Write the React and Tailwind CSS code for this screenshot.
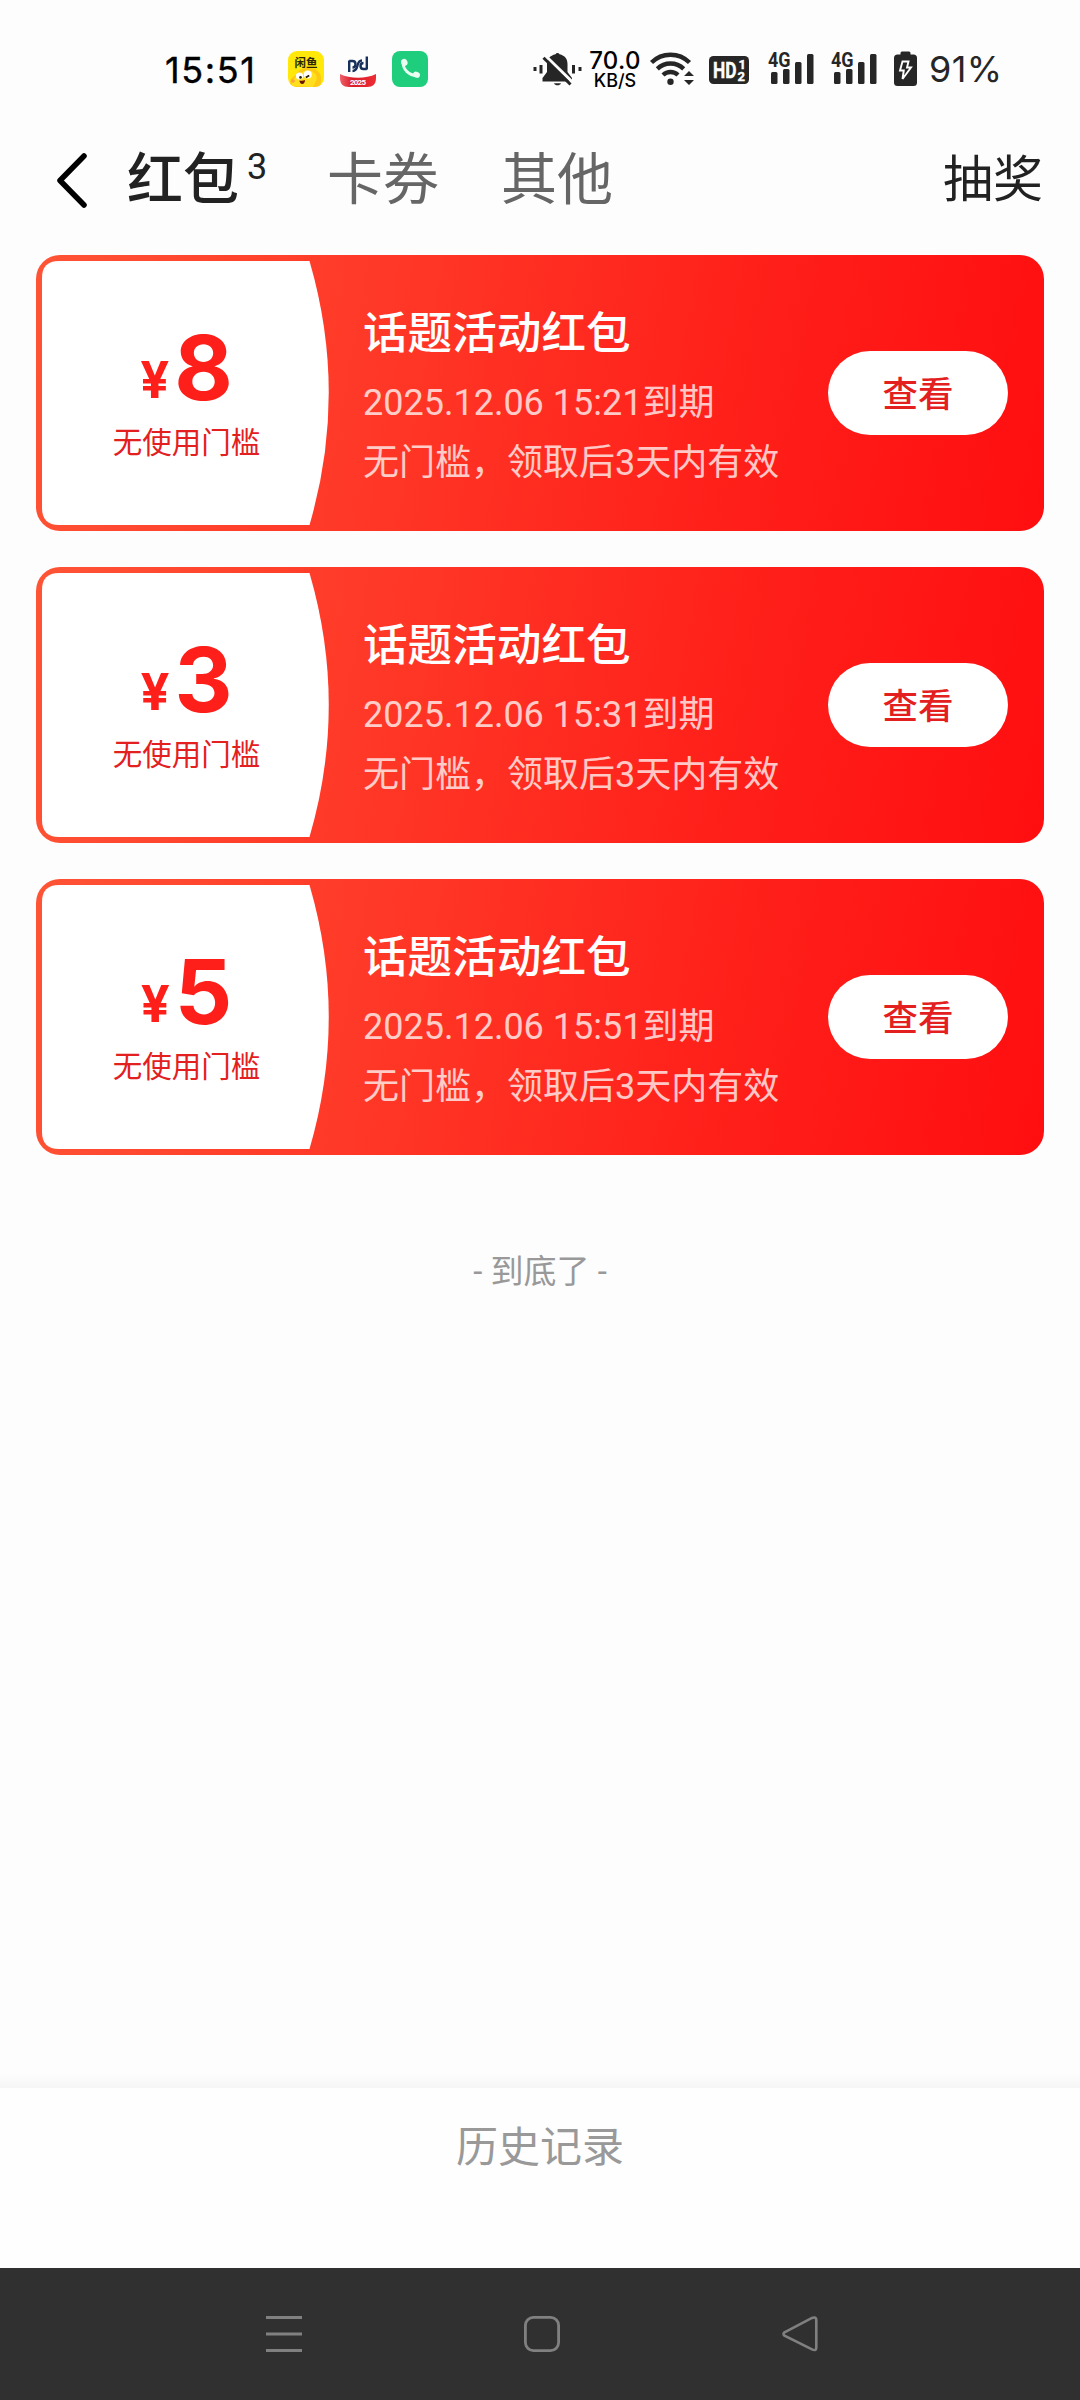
import React from "react";

const COUPONS = [
  { id: 1, amount: "8", expires: "2025.12.06 15:21到期" },
  { id: 2, amount: "3", expires: "2025.12.06 15:31到期" },
  { id: 3, amount: "5", expires: "2025.12.06 15:51到期" },
];

function XianyuIcon() {
  return (
    <svg width="36" height="36" viewBox="0 0 36 36">
      <defs>
        <clipPath id="xy">
          <rect width="36" height="36" rx="9" />
        </clipPath>
      </defs>
      <g clipPath="url(#xy)">
        <rect width="36" height="36" fill="#ffe80a" />
        <path d="M3 36C1 31 2 27 8 24c2-5 7-7 12-7 9 0 14 5 13 13l-1 6z" fill="#ffc814" />
        <path d="M4 35c-1-4 1-8 6-10 3-5 8-6 12-5 6 1 8 6 6 10l-3 6z" fill="#ffdf1e" />
        <text x="6.500" y="15.500" fill="#2b2600" fontSize="11.500" fontWeight="700" fontFamily="'Noto Sans CJK SC', sans-serif">
          闲鱼
        </text>
        <circle cx="11.500" cy="25" r="3.600" fill="#fff" />
        <circle cx="19.800" cy="23.600" r="4" fill="#fff" />
        <circle cx="12.500" cy="26.400" r="1.300" fill="#2a1a00" />
        <path d="M17.800 26.500l3.400-2" stroke="#2a1a00" strokeWidth="1.800" />
        <path d="M11.500 29.500c2 .6 4 .4 5.500-.4 0 2.400-1 3.900-2.800 3.900-1.700 0-2.600-1.500-2.700-3.500z" fill="#6b1400" />
        <circle cx="5" cy="30" r="1.800" fill="#ffa03c" />
      </g>
    </svg>
  );
}

function BankIcon() {
  return (
    <svg width="36" height="36" viewBox="0 0 36 36">
      <defs>
        <linearGradient id="bank" x1="0" y1="0" x2="1" y2="0">
          <stop offset="0" stopColor="#f0606a" />
          <stop offset=".35" stopColor="#d81e2a" />
          <stop offset="1" stopColor="#ee2c34" />
        </linearGradient>
      </defs>
      <g fill="none" stroke="#16305c" strokeWidth="2.400">
        <path d="M9.200 21V9.500M9.200 10H12.500C16.500 10 16.500 16.500 12.500 16.500" />
        <path d="M26.800 5.500V18.500M26.800 18H23.500C19.500 18 19.500 12 23.500 12" />
        <path d="M12.500 20C20 20 15 9.500 22 9.500" />
      </g>
      <path d="M0 23c10 5 26 5 36 0v4c0 6-3 9-9 9H9c-6 0-9-3-9-9z" fill="url(#bank)" />
      <text x="18" y="34" textAnchor="middle" fill="#fff" fontSize="8" fontWeight="700" fontFamily="Roboto, sans-serif" textLength="16">
        2025
      </text>
    </svg>
  );
}

function PhoneIcon() {
  return (
    <svg width="36" height="36" viewBox="0 0 36 36">
      <rect width="36" height="36" rx="8" fill="#1fce7c" />
      <path d="M11 11.500c0 7 6 13 13.500 13" fill="none" stroke="#e8fff2" strokeWidth="2.800" />
      <ellipse cx="12.300" cy="11.300" rx="3.200" ry="3.600" fill="#e8fff2" transform="rotate(-20 12.300 11.300)" />
      <ellipse cx="24.500" cy="23.800" rx="3.600" ry="3" fill="#e8fff2" transform="rotate(20 24.500 23.800)" />
    </svg>
  );
}

function MuteIcon() {
  return (
    <svg width="50" height="36" viewBox="0 0 50 36" fill="#262626">
      <rect x="1.500" y="16" width="3" height="4" />
      <rect x="7.500" y="14" width="3" height="8.500" />
      <rect x="40" y="14" width="3" height="8.500" />
      <rect x="46.500" y="16" width="3" height="4" />
      <path d="M23.500 3.200a2.200 2.200 0 0 1 4 0C33 4.500 35.500 8 35.500 13v8l4.500 6v3.500H10.500V27l4.500-6v-8c0-5 3-8.500 8.500-9.800z" />
      <path d="M22 32.200h7c-1 2.800-6 2.800-7 0z" />
      <path d="M13.500 4.800L41 31.600" stroke="#fdfdfd" strokeWidth="3" />
      <path d="M11.500 6.800L38.500 33.500" stroke="#262626" strokeWidth="3" />
    </svg>
  );
}

function WifiIcon() {
  return (
    <svg width="45" height="36" viewBox="0 0 45 36" fill="none" stroke="#262626">
      <path d="M1.500 11.500a27 27 0 0 1 38 0" strokeWidth="4.400" />
      <path d="M7.300 17.800a19 19 0 0 1 26.400 0" strokeWidth="4.400" />
      <path d="M13 24a11 11 0 0 1 15 0" strokeWidth="4.400" />
      <circle cx="20.500" cy="30.800" r="3.200" fill="#262626" stroke="none" />
      <path d="M34 25l5-5 5 5zM34 29l5 5 5-5z" fill="#262626" stroke="none" />
    </svg>
  );
}

function HdIcon() {
  return (
    <svg width="40" height="28" viewBox="0 0 40 28" fill="#fff" stroke="#fff" strokeWidth="0.400" fontFamily="Roboto, sans-serif" fontWeight="700">
      <rect width="40" height="28" rx="4.500" fill="#262626" stroke="none" />
      <text x="4" y="21.500" fontSize="21.500" textLength="23.500" lengthAdjust="spacingAndGlyphs">HD</text>
      <text x="29.500" y="13" fontSize="13">1</text>
      <text x="28.500" y="25" fontSize="13">2</text>
    </svg>
  );
}

function SignalIcon() {
  return (
    <svg className="overflow-visible" width="47" height="36" viewBox="0 0 47 36" fill="#262626">
      <text x="0" y="15.500" fontSize="20" fontWeight="700" fontFamily="Roboto, sans-serif" textLength="22.500" lengthAdjust="spacingAndGlyphs">
        4G
      </text>
      <rect x="3" y="21" width="6.500" height="12" rx="1.500" />
      <rect x="15" y="18" width="6.500" height="15" rx="1.500" />
      <rect x="27" y="11" width="6.500" height="22" rx="1.500" />
      <rect x="39" y="3" width="6.500" height="30" rx="1.500" />
    </svg>
  );
}

function BatteryIcon() {
  return (
    <svg width="23" height="36" viewBox="0 0 23 36">
      <rect x="6.500" y="0.500" width="10" height="5" rx="1.500" fill="#262626" />
      <rect x="0" y="3.500" width="23" height="31.500" rx="3.500" fill="#262626" />
      <path d="M8.500 10.500h6l-1.500 6h4L8.500 28l1.300-8.500H6z" fill="none" stroke="#fff" strokeWidth="1.900" />
    </svg>
  );
}

function StatusBar() {
  return (
    <div className="flex h-[138px] items-start pl-[165px] pt-[51px] font-['Inter',sans-serif] text-[#262626]">
      <div className="flex h-[38px] w-[123px] items-center text-[36px] leading-none tracking-[1.6px] text-black">
        <span className="[-webkit-text-stroke:0.4px_#000]">15:51</span>
      </div>
      <div className="flex w-[244px] gap-4">
        <XianyuIcon />
        <BankIcon />
        <PhoneIcon />
      </div>
      <MuteIcon />
      <div className="ml-[5px] flex w-[56px] flex-col items-center font-medium text-black">
        <span className="text-[24px] leading-[19px] tracking-[0.3px]">70.0</span>
        <span className="pt-[2px] text-[18px] leading-[18px]">KB/S</span>
      </div>
      <div className="ml-[7px]">
        <WifiIcon />
      </div>
      <div className="ml-3.5 pt-[5px]">
        <HdIcon />
      </div>
      <div className="ml-[19px] flex gap-4">
        <SignalIcon />
        <SignalIcon />
      </div>
      <div className="ml-4">
        <BatteryIcon />
      </div>
      <div className="ml-3 flex h-9 items-center text-[36px] leading-none tracking-[0.4px]">91%</div>
    </div>
  );
}

function TabBar() {
  return (
    <nav className="flex h-[84px] items-center pl-[55px] pr-[37px] text-[56px] leading-none text-[#666]">
      <svg width="34" height="56" viewBox="0 0 34 56" fill="none" stroke="#000" strokeWidth="5.500" strokeLinecap="round" strokeLinejoin="round">
        <path d="M29 4L5 28.500 29 53" />
      </svg>
      <span className="ml-[38px] font-medium text-[#222]">红包</span>
      <span className="ml-[8px] w-[80px] -translate-y-[13px] text-[36px] text-[#222]">3</span>
      <span>卡券</span>
      <span className="ml-[62px]">其他</span>
      <span className="ml-auto text-[50px] text-[#222]">抽奖</span>
    </nav>
  );
}

function Coupon({ amount, expires }) {
  return (
    <article className="flex h-[276px] rounded-3xl bg-[linear-gradient(100deg,#ff5436_0%,#ff3c29_28%,#ff201a_68%,#ff0e10_100%)] p-1.5">
      <div className="relative h-[264px] w-[287px]">
        <svg className="absolute inset-0" width="287" height="264" viewBox="0 0 287 264">
          <path d="M17 0H267.500Q306 132 267.500 264H17Q0 264 0 247V17Q0 0 17 0z" fill="#fff" />
        </svg>
        <div className="relative flex h-full w-[289px] flex-col items-center pt-[62px]">
          <div className="flex items-baseline gap-[5px] font-['Inter',sans-serif] font-bold leading-[90px] text-[#ff1f1a]">
            <span className="-translate-y-0.5 text-[51px]">¥</span>
            <span className="text-[90px]">{amount}</span>
          </div>
          <div className="-mt-1 text-[29.500px] leading-[40px] text-[#e3201f]">无使用门槛</div>
        </div>
      </div>
      <div className="ml-[34px] pt-[49px] text-white">
        <h2 className="text-[44.600px] font-medium leading-[48px]">话题活动红包</h2>
        <p className="mt-5 text-[36px] leading-[50px] opacity-75">{expires}</p>
        <p className="mt-2.5 text-[36px] leading-[50px] opacity-75">无门槛，领取后3天内有效</p>
      </div>
      <button
        type="button"
        className="ml-auto mr-[30px] h-[84px] w-[180px] self-center rounded-full bg-white pt-1.5 text-[35.500px] font-medium leading-none text-[#e3201f]"
      >
        查看
      </button>
    </article>
  );
}

function SystemNav() {
  return (
    <div className="flex h-[132px] items-center justify-between bg-[#303030] pl-[266px] pr-[262px]">
      <svg width="36" height="36" viewBox="0 0 36 36" stroke="#808080" strokeWidth="3">
        <path d="M0 1.500h36M0 18h36M0 34.500h36" />
      </svg>
      <svg width="36" height="36" viewBox="0 0 36 36" fill="none" stroke="#808080" strokeWidth="2.800">
        <rect x="1.400" y="1.400" width="33.200" height="33.200" rx="8" />
      </svg>
      <svg width="36" height="36" viewBox="0 0 36 36" fill="none" stroke="#808080" strokeWidth="2.600">
        <path d="M2.500 16.300L30 1.900Q34.300 0.500 34.300 4V31.500Q34.300 35 30.500 33.600L2.500 19.700Q0.500 18 2.500 16.300z" />
      </svg>
    </div>
  );
}

export default function App() {
  return (
    <main className="flex h-[2400px] w-[1080px] flex-col overflow-hidden whitespace-nowrap bg-[#fdfdfd] font-['Roboto','Noto_Sans_CJK_SC',sans-serif]">
      <StatusBar />
      <TabBar />
      <section className="flex flex-col gap-9 px-9 pt-[33px]">
        {COUPONS.map((coupon) => (
          <Coupon key={coupon.id} amount={coupon.amount} expires={coupon.expires} />
        ))}
      </section>
      <p className="pt-[97px] text-center text-[33px] leading-[40px] text-[#999]">- 到底了 -</p>
      <div className="mt-auto h-4 bg-gradient-to-b from-[#fdfdfd] to-[#f6f6f6]" />
      <footer className="flex h-[180px] justify-center bg-[#fefefe] pt-[36px] text-[42px] leading-[48px] text-[#999]">
        历史记录
      </footer>
      <SystemNav />
    </main>
  );
}
